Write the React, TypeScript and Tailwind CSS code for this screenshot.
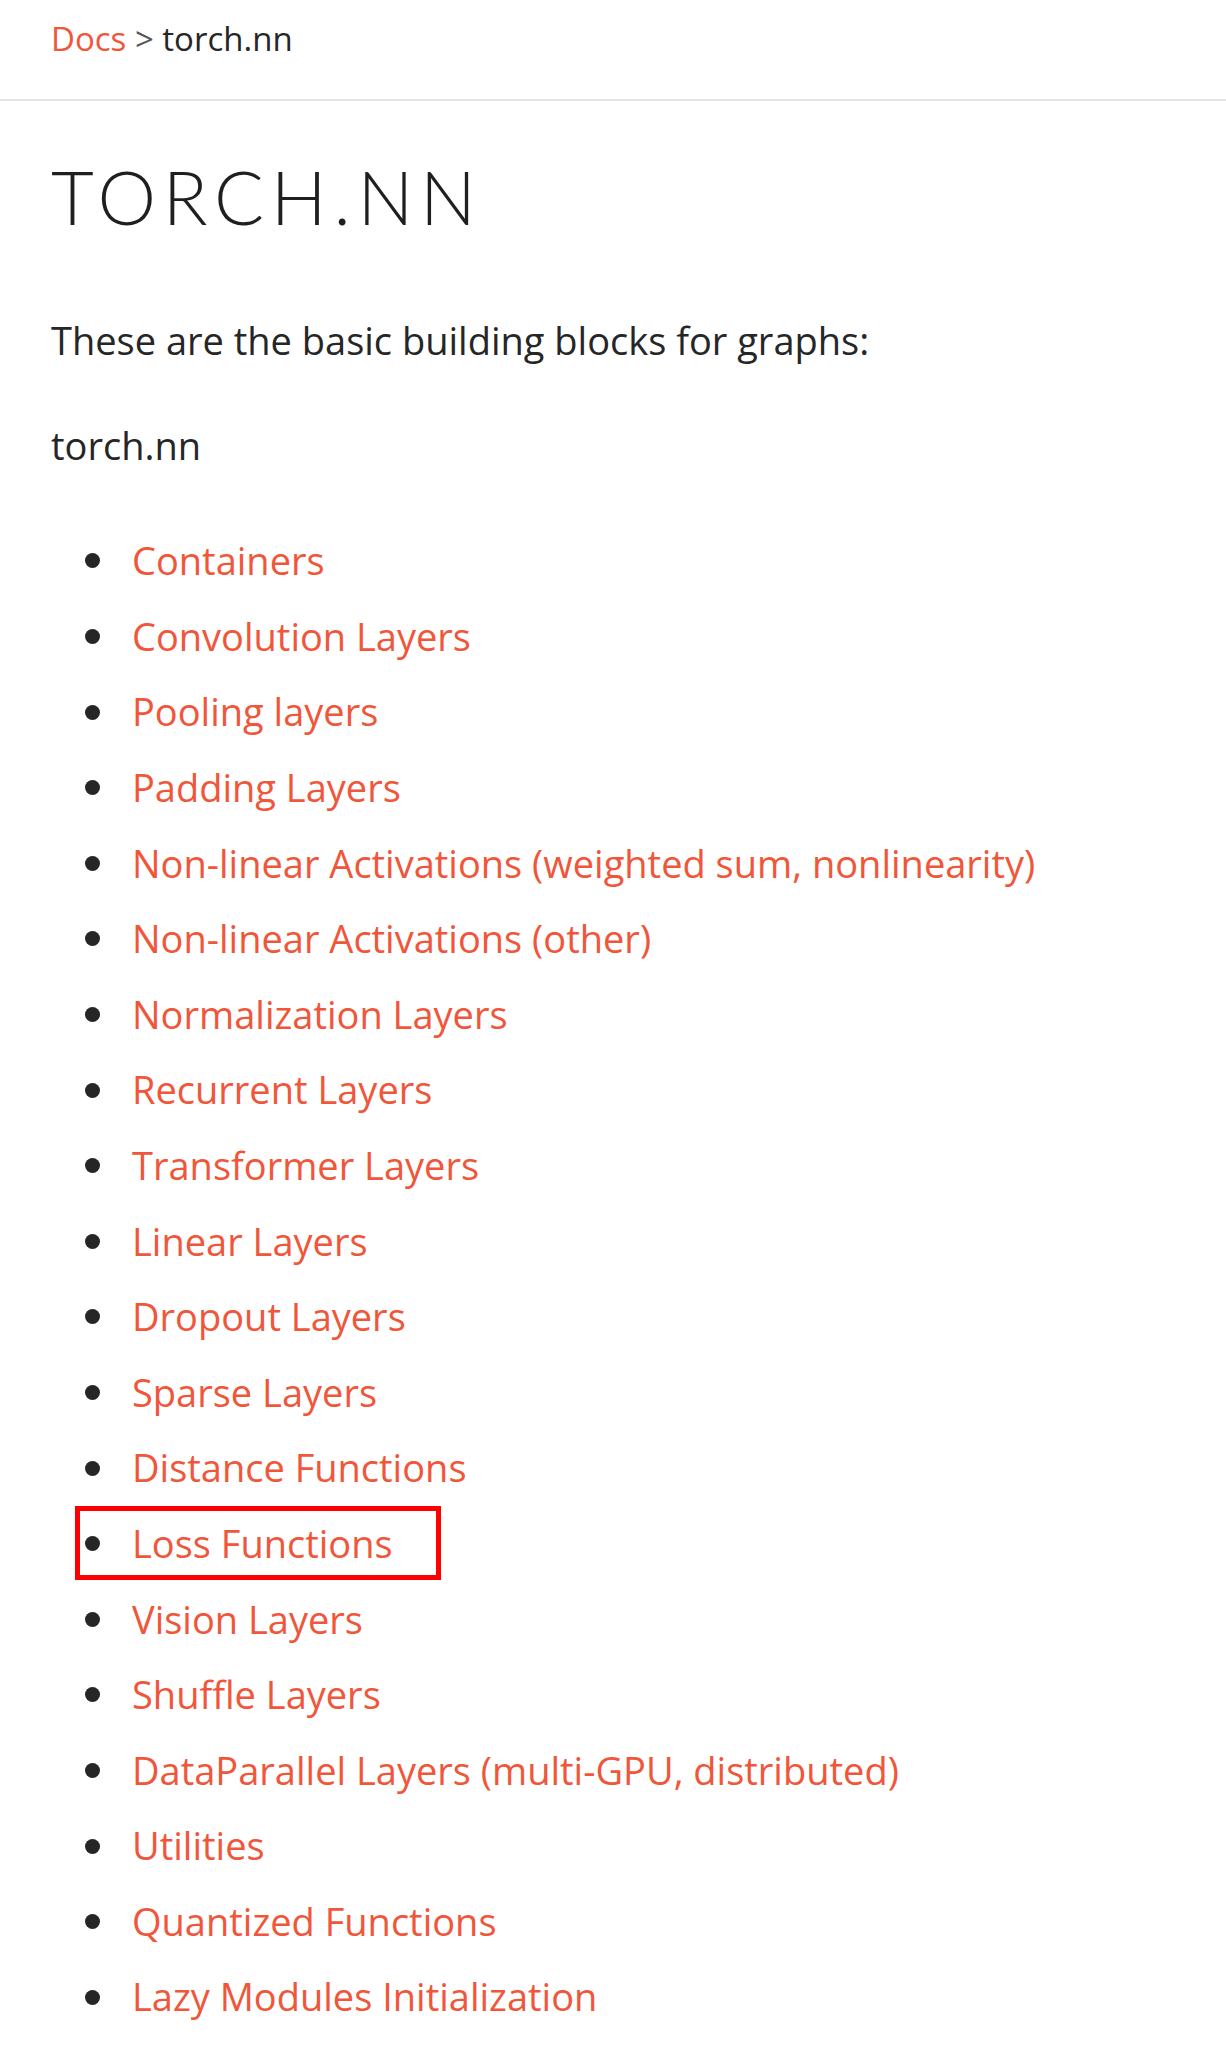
import React from 'react';

// torch.nn の目次ページ（Loss Functions に赤枠）
const sections = [
  'Containers',
  'Convolution Layers',
  'Pooling layers',
  'Padding Layers',
  'Non-linear Activations (weighted sum, nonlinearity)',
  'Non-linear Activations (other)',
  'Normalization Layers',
  'Recurrent Layers',
  'Transformer Layers',
  'Linear Layers',
  'Dropout Layers',
  'Sparse Layers',
  'Distance Functions',
  'Loss Functions',
  'Vision Layers',
  'Shuffle Layers',
  'DataParallel Layers (multi-GPU, distributed)',
  'Utilities',
  'Quantized Functions',
  'Lazy Modules Initialization',
];

export default function App() {
  return (
    <div className="min-h-[2055px] w-full bg-white font-['Open_Sans',sans-serif] text-[#262626]">
      {/* breadcrumb */}
      <div className="h-[101px] border-b-2 border-[#e4e4e4] pl-[51px] pt-[14px]">
        <div className="text-[33px] leading-[49.5px]">
          <a href="#" className="text-[#f0563a]">Docs</a>
          <span className="text-[#555]"> &gt; </span>
          <span>torch.nn</span>
        </div>
      </div>

      <div className="pl-[51px]">
        <h1 className="mt-[59px] font-['Lato',sans-serif] text-[74px] font-light leading-[74px] tracking-[6.7px] text-[#1f1f1f]">
          TORCH.NN
        </h1>

        <p className="mt-[69px] text-[38px] leading-[75.6px]">
          These are the basic building blocks for graphs:
        </p>

        <p className="mt-[29px] text-[38px] leading-[75.6px]">torch.nn</p>

        <ul className="mt-[40px] flex flex-col">
          {sections.map((name) => (
            <li key={name} className="relative flex items-center text-[38px] leading-[75.6px]">
              <span className="ml-[34px] h-[15px] w-[15px] shrink-0 rounded-full bg-[#262626]" />
              <a href="#" className="ml-[32px] text-[#f0563a]">
                {name}
              </a>
              {name === 'Loss Functions' && (
                <div className="pointer-events-none absolute left-[24px] top-[0px] h-[74px] w-[366px] border-[5px] border-[#ff0000]" />
              )}
            </li>
          ))}
        </ul>
      </div>
    </div>
  );
}
